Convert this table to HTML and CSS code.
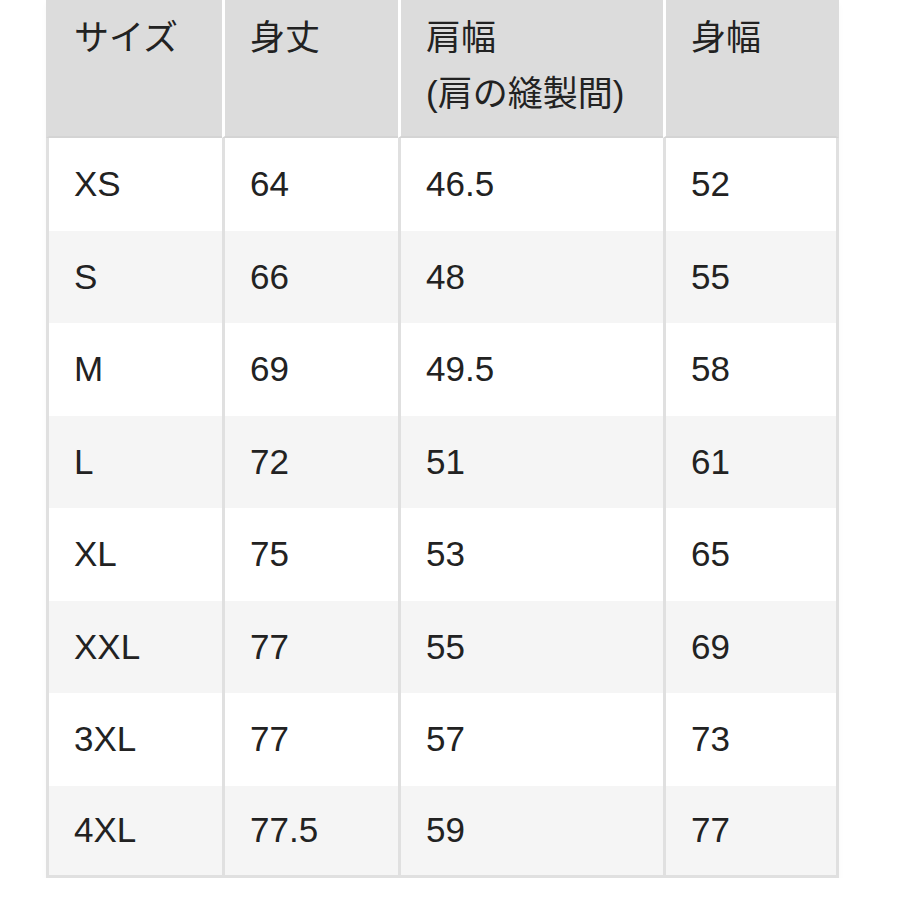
FILE: index.html
```html
<!DOCTYPE html>
<html lang="ja">
<head>
<meta charset="utf-8">
<link rel="stylesheet" href="styles.css">
</head>
<body>
<table class="size-table">
  <colgroup>
    <col class="c1"><col class="c2"><col class="c3"><col class="c4">
  </colgroup>
  <thead>
    <tr>
      <th>サイズ</th>
      <th>身丈</th>
      <th>肩幅<br>(肩の縫製間)</th>
      <th>身幅</th>
    </tr>
  </thead>
  <tbody>
    <tr><td>XS</td><td>64</td><td>46.5</td><td>52</td></tr>
    <tr><td>S</td><td>66</td><td>48</td><td>55</td></tr>
    <tr><td>M</td><td>69</td><td>49.5</td><td>58</td></tr>
    <tr><td>L</td><td>72</td><td>51</td><td>61</td></tr>
    <tr><td>XL</td><td>75</td><td>53</td><td>65</td></tr>
    <tr><td>XXL</td><td>77</td><td>55</td><td>69</td></tr>
    <tr><td>3XL</td><td>77</td><td>57</td><td>73</td></tr>
    <tr><td>4XL</td><td>77.5</td><td>59</td><td>77</td></tr>
  </tbody>
</table>
</body>
</html>
```

FILE: styles.css
```css
html, body {
  margin: 0;
  padding: 0;
  background: #ffffff;
}

body {
  font-family: "Liberation Sans", "Noto Sans CJK JP", sans-serif;
  color: #222222;
}

.size-table {
  margin-left: 46px;
  width: 793px;
  border-collapse: separate;
  border-spacing: 0;
  table-layout: fixed;
  font-size: 35px;
  box-shadow: 0 4px 6px rgba(0, 0, 0, 0.03);
}

.c1 { width: 176px; }
.c2 { width: 176px; }
.c3 { width: 265px; }
.c4 { width: 176px; }

.size-table th,
.size-table td {
  box-sizing: border-box;
  text-align: left;
  font-weight: normal;
  padding-left: 25px;
  padding-right: 0;
}

.size-table th {
  height: 138px;
  vertical-align: top;
  padding-top: 10px;
  line-height: 56px;
  background: #dcdcdc;
  border-left: 3px solid #ffffff;
  border-bottom: 2px solid #d4d4d4;
}

.size-table th:first-child {
  border-left-color: #dcdcdc;
}

.size-table th:last-child {
  border-right: 3px solid #dcdcdc;
}

.size-table td {
  height: 92.5px;
  vertical-align: middle;
  line-height: 40px;
  padding-top: 0;
  padding-bottom: 0;
  border-left: 3px solid #e0e0e0;
  background: #ffffff;
}

.size-table td:last-child {
  border-right: 3px solid #e0e0e0;
}

.size-table tbody tr:nth-child(even) td {
  background: #f5f5f5;
}

.size-table tbody tr:last-child td {
  border-bottom: 3px solid #e0e0e0;
}
```
